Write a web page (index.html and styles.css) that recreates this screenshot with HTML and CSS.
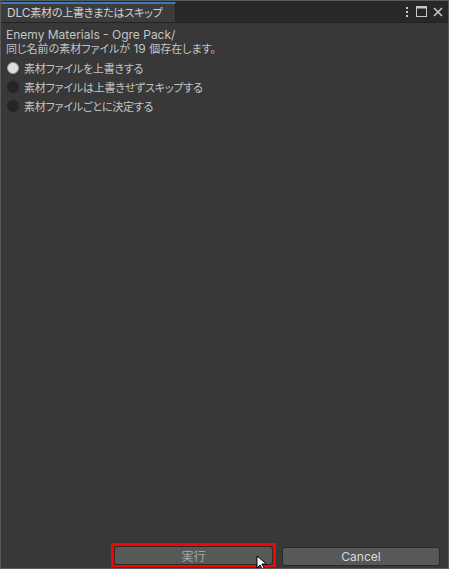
FILE: index.html
```html
<!DOCTYPE html>
<html>
<head>
<meta charset="utf-8">
<link rel="stylesheet" href="styles.css">
</head>
<body>
<div class="window">
  <div class="header">
    <div class="tab"><span class="lat">DLC</span>素材の上書きまたはスキップ</div>
    <div class="spacer"></div>
    <div class="icons">
      <svg class="ico" width="6" height="12" viewBox="0 0 6 12"><rect x="2" y="1" width="2" height="2" fill="#c8c8c8"/><rect x="2" y="5" width="2" height="2" fill="#c8c8c8"/><rect x="2" y="9" width="2" height="2" fill="#c8c8c8"/></svg>
      <svg class="ico" width="11" height="11" viewBox="0 0 11 11"><rect x="0.5" y="0.5" width="10" height="10" fill="none" stroke="#c8c8c8"/><rect x="0.5" y="0.5" width="10" height="2" fill="#c8c8c8"/></svg>
      <svg class="ico" width="10" height="10" viewBox="0 0 10 10"><path d="M1 1 L9 9 M9 1 L1 9" stroke="#c8c8c8" stroke-width="1.6"/></svg>
    </div>
  </div>
  <div class="content">
    <div class="line"><span class="lat">Enemy Materials - Ogre Pack/</span></div>
    <div class="line">同じ名前の素材ファイルが<span class="lat"> 19 </span>個存在します。</div>
    <div class="options">
      <div class="opt"><span class="radio on"></span><span>素材ファイルを上書きする</span></div>
      <div class="opt"><span class="radio"></span><span>素材ファイルは上書きせずスキップする</span></div>
      <div class="opt"><span class="radio"></span><span>素材ファイルごとに決定する</span></div>
    </div>
  </div>
  <div class="footer">
    <div class="hl"><button class="btn">実行</button></div>
    <button class="btn cancel">Cancel</button>
  </div>
  <svg class="cursor" width="12" height="16" viewBox="0 0 12 16"><path d="M1 1 L1 13 L4 10 L6.5 15 L8.5 14 L6 9 L10.5 9 Z" fill="#fff" stroke="#000" stroke-width="1"/></svg>
</div>
</body>
</html>
```

FILE: styles.css
```css
html, body {
  margin: 0;
  padding: 0;
  background: #383838;
}
.window {
  position: relative;
  width: 449px;
  height: 569px;
  box-sizing: border-box;
  border: 1px solid #5a5a5a;
  background: #383838;
  display: flex;
  flex-direction: column;
  font-family: "Inter", "Noto Sans CJK JP", sans-serif;
  font-size: 11px;
  font-feature-settings: "palt";
  color: #c4c4c4;
  overflow: hidden;
}
.lat {
  font-size: 12px;
  font-feature-settings: normal;
}
.header {
  height: 21px;
  background: #282828;
  display: flex;
  align-items: stretch;
  flex-shrink: 0;
  border-bottom: 1px solid #232323;
}
.tab {
  width: 175px;
  box-sizing: border-box;
  background: #3c3c3c;
  border-top: 2px solid #3a79bb;
  margin-top: 1px;
  padding-left: 6px;
  line-height: 18px;
  color: #d2d2d2;
  border-right: 1px solid #232323;
  white-space: nowrap;
  overflow: hidden;
  letter-spacing: -0.2px;
}
.spacer { flex: 1; }
.icons {
  display: flex;
  align-items: center;
  gap: 6px;
  padding-right: 5px;
}
.ico { display: block; }
.content {
  flex: 1;
  padding: 5px 5px 0 5px;
}
.line {
  line-height: 14px;
  height: 14px;
  white-space: nowrap;
}
.options {
  margin-top: 5px;
  display: flex;
  flex-direction: column;
  gap: 6px;
}
.opt {
  display: flex;
  align-items: center;
  height: 13px;
  gap: 5px;
  white-space: nowrap;
  letter-spacing: -0.2px;
}
.radio {
  display: inline-block;
  width: 12px;
  height: 12px;
  border-radius: 50%;
  background: #252525;
  margin-left: 1px;
  box-sizing: border-box;
}
.radio.on {
  background: #dedede;
  border: 1px solid #9a9a9a;
}
.footer {
  display: flex;
  gap: 6px;
  padding: 0 8px 1px 110px;
  height: 24px;
  align-items: flex-end;
}
.hl {
  border: 3px solid #ff0000;
  border-bottom-width: 2px;
  width: 166px;
  box-sizing: border-box;
  padding: 0;
  display: flex;
  height: 24px;
}
.btn {
  font-family: "Inter", "Noto Sans CJK JP", sans-serif;
  font-size: 12px;
  color: #a8a8a8;
  background: #585858;
  border: 1px solid #2a2a2a;
  border-radius: 3px;
  height: 19px;
  padding: 0;
  flex: 1;
  margin: 0;
}
.cancel {
  width: 158px;
  flex: none;
  color: #dadada;
  margin-bottom: 1px;
}
.cursor {
  position: absolute;
  left: 255px;
  top: 554px;
}
```
